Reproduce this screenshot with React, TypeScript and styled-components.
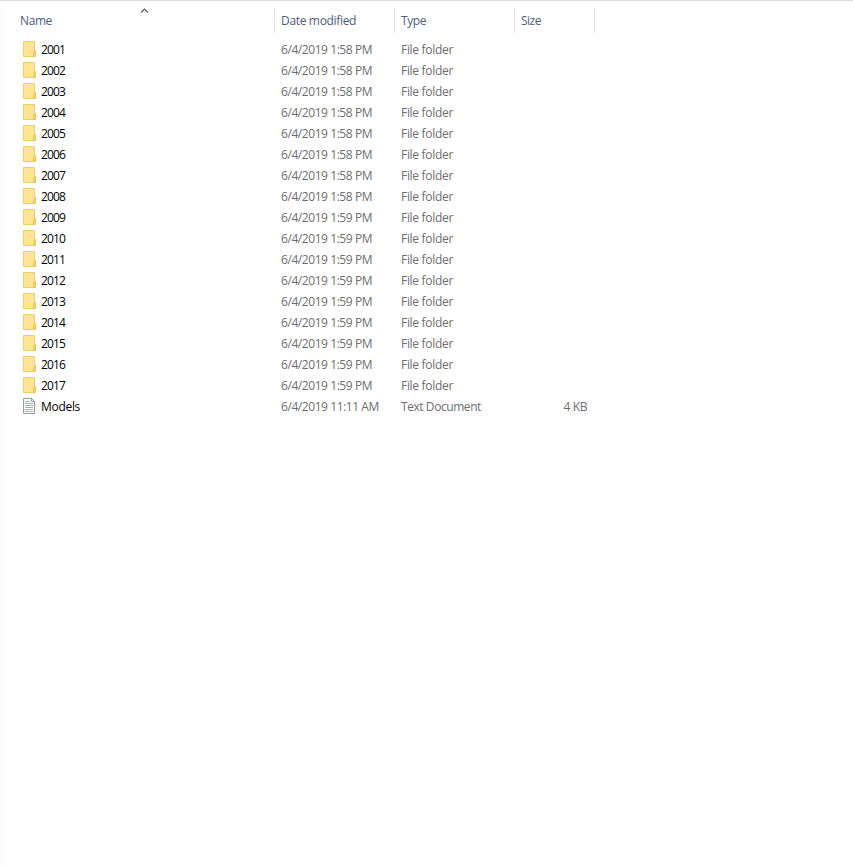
import React from 'react';
import styled, { createGlobalStyle } from 'styled-components';

const GlobalStyle = createGlobalStyle`
  * { box-sizing: border-box; }
  body { margin: 0; background: #fff; }
`;

const Pane = styled.main`
  width: 853px;
  height: 866px;
  overflow: hidden;
  background: #fff;
  border-top: 1px solid #d9d9d9;
  font: 12px/21px 'Open Sans', 'Noto Sans', sans-serif;
  display: flex;
`;

const SplitEdge = styled.div`
  width: 2px;
  margin-top: 7px;
  border-right: 1px solid #f5f5f5;
`;

const Listing = styled.div`
  flex: 1;
  padding-top: 7px;
`;

const columns = '273px 120px 120px 80px';

const Header = styled.div`
  display: grid;
  grid-template-columns: ${columns};
  height: 25px;
  margin-bottom: 6px;
`;

const HeaderCell = styled.div<{ $indent: number; $tracking: number }>`
  position: relative;
  padding-left: ${(p) => p.$indent}px;
  border-right: 1px solid #e3e6ea;
  color: #4c5d7c;
  line-height: 26px;
  white-space: nowrap;
  letter-spacing: ${(p) => p.$tracking}px;
`;

const SortArrow = styled.svg`
  position: absolute;
  left: 138px;
  top: 0;
`;

const Row = styled.div`
  display: grid;
  grid-template-columns: ${columns};
  height: 21px;
`;

const NameCell = styled.div<{ $tracking: number }>`
  display: flex;
  align-items: flex-start;
  gap: 4px;
  padding-left: 20px;
  color: #000;
  letter-spacing: ${(p) => p.$tracking}px;
`;

const ItemIcon = styled.svg`
  flex: none;
  margin-top: 1px;
`;

const DetailCell = styled.div<{ $tracking: number }>`
  padding-left: 6px;
  color: #6d6d6d;
  white-space: nowrap;
  letter-spacing: ${(p) => p.$tracking}px;
`;

const SizeCell = styled(DetailCell)`
  padding-right: 8px;
  text-align: right;
`;

const FolderIcon = () => (
  <ItemIcon width="15" height="18" viewBox="0 0 15 18">
    <path d="M1.500 1.500h11v15h-11z" fill="#ffe494" stroke="#ecd070" />
    <path d="M11.500 16.500v-3.500l1-2.500h1v6z" fill="#fbd765" stroke="#e8c65a" />
  </ItemIcon>
);

const TextFileIcon = () => (
  <ItemIcon width="15" height="18" viewBox="0 0 15 18">
    <path d="M1.500 1.500h8l3 3v12h-11z" fill="#fff" stroke="#9a9a9a" />
    <path d="M9.500 1.500v3h3" fill="none" stroke="#9a9a9a" />
    <path d="M3 4.500h5M3 6.500h8M3 8.500h8M3 10.500h8M3 12.500h8M3 14.500h8" stroke="#adb2b6" />
  </ItemIcon>
);

const headers = [
  { label: 'Name', indent: 18, tracking: -0.4 },
  { label: 'Date modified', indent: 6, tracking: -0.33 },
  { label: 'Type', indent: 6, tracking: -0.4 },
  { label: 'Size', indent: 6, tracking: -0.5 },
];

const folders = Array.from({ length: 17 }, (_, i) => ({
  name: String(2001 + i),
  modified: i < 8 ? '6/4/2019 1:58 PM' : '6/4/2019 1:59 PM',
}));

export default function App() {
  return (
    <>
      <GlobalStyle />
      <Pane>
        <SplitEdge />
        <Listing>
          <Header>
            {headers.map((h, i) => (
              <HeaderCell key={h.label} $indent={h.indent} $tracking={h.tracking}>
                {h.label}
                {i === 0 && (
                  <SortArrow width="9" height="6" viewBox="0 0 9 6">
                    <path d="M1 4.500 4.500 1 8 4.500" fill="none" stroke="#5c5c5c" strokeWidth="1.200" />
                  </SortArrow>
                )}
              </HeaderCell>
            ))}
          </Header>
          {folders.map((f) => (
            <Row key={f.name}>
              <NameCell $tracking={-0.9}>
                <FolderIcon />
                {f.name}
              </NameCell>
              <DetailCell $tracking={-0.43}>{f.modified}</DetailCell>
              <DetailCell $tracking={-0.3}>File folder</DetailCell>
            </Row>
          ))}
          <Row>
            <NameCell $tracking={-0.3}>
              <TextFileIcon />
              Models
            </NameCell>
            <DetailCell $tracking={-0.43}>6/4/2019 11:11 AM</DetailCell>
            <DetailCell $tracking={-0.43}>Text Document</DetailCell>
            <SizeCell $tracking={-0.4}>4 KB</SizeCell>
          </Row>
        </Listing>
      </Pane>
    </>
  );
}
